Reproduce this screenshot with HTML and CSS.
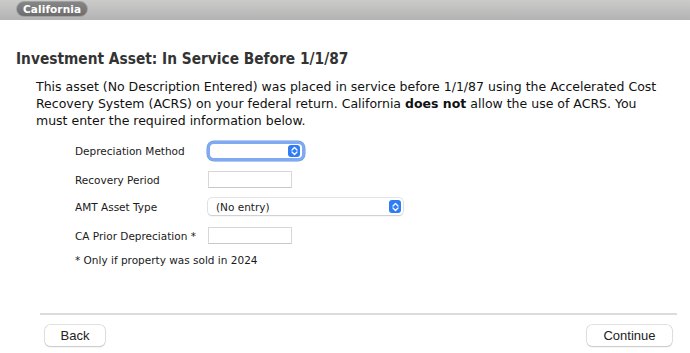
FILE: index.html
```html
<!DOCTYPE html>
<html>
<head>
<meta charset="utf-8">
<link rel="stylesheet" href="styles.css">
</head>
<body>
<div class="page">
  <header class="topbar">
    <span class="pill">California</span>
  </header>
  <main class="content">
    <h1 class="title">Investment Asset: In Service Before 1/1/87</h1>
    <p class="intro">This asset (No Description Entered) was placed in service before 1/1/87 using the Accelerated Cost Recovery System (ACRS) on your federal return. California <b>does not</b> allow the use of ACRS. You must enter the required information below.</p>
    <div class="form">
      <div class="row row-1">
        <span class="label">Depreciation Method</span>
        <div class="select select-focus select-short">
          <span class="select-text"></span>
          <span class="stepper"><svg width="7" height="10" viewBox="0 0 7 10"><path d="M1 4 L3.5 1.5 L6 4 M1 6 L3.5 8.5 L6 6" fill="none" stroke="#fff" stroke-width="1.3" stroke-linecap="round" stroke-linejoin="round"/></svg></span>
        </div>
      </div>
      <div class="row row-2">
        <span class="label">Recovery Period</span>
        <div class="input"></div>
      </div>
      <div class="row row-3">
        <span class="label">AMT Asset Type</span>
        <div class="select select-long">
          <span class="select-text">(No entry)</span>
          <span class="stepper"><svg width="7" height="10" viewBox="0 0 7 10"><path d="M1 4 L3.5 1.5 L6 4 M1 6 L3.5 8.5 L6 6" fill="none" stroke="#fff" stroke-width="1.3" stroke-linecap="round" stroke-linejoin="round"/></svg></span>
        </div>
      </div>
      <div class="row row-4">
        <span class="label">CA Prior Depreciation *</span>
        <div class="input"></div>
      </div>
      <p class="note">* Only if property was sold in 2024</p>
    </div>
  </main>
  <footer class="footer">
    <div class="rule"></div>
    <div class="buttons">
      <button class="btn btn-back">Back</button>
      <button class="btn btn-continue">Continue</button>
    </div>
  </footer>
</div>
</body>
</html>
```

FILE: styles.css
```css
html, body {
  margin: 0;
  padding: 0;
  background: #ffffff;
}
body {
  font-family: "DejaVu Sans", Verdana, sans-serif;
  color: #111;
  width: 690px;
  height: 353px;
  overflow: hidden;
}
.page {
  display: flex;
  flex-direction: column;
  height: 353px;
}
.topbar {
  height: 20px;
  box-sizing: border-box;
  background: linear-gradient(#cbcbca, #b3b3b3);
  display: flex;
  align-items: flex-start;
  padding: 1px 0 0 16px;
}
.pill {
  display: inline-block;
  height: 16px;
  box-sizing: border-box;
  padding: 0 6px;
  border-radius: 8px;
  background: linear-gradient(#868686, #6d6d6d);
  border: 1px solid #a0a0a0;
  color: #fff;
  font-weight: bold;
  font-size: 10.5px;
  line-height: 14px;
  letter-spacing: 0.1px;
}
.content {
  padding: 0 0 0 16px;
  flex: 1;
}
.title {
  margin: 29px 0 0 0;
  font-family: "DejaVu Sans Condensed", "DejaVu Sans", sans-serif;
  font-stretch: condensed;
  font-size: 15.3px;
  line-height: 20px;
  font-weight: bold;
  color: #333;
}
.intro {
  margin: 9px 0 0 20px;
  width: 634px;
  font-size: 12.5px;
  line-height: 17px;
  color: #111;
}
.form {
  margin: 13px 0 0 59px;
  display: flex;
  flex-direction: column;
}
.row {
  display: flex;
  align-items: center;
  height: 17px;
}
.row-1 { margin-bottom: 12px; }
.row-2 { margin-bottom: 10px; }
.row-3 { margin-bottom: 12px; }
.row-4 { margin-bottom: 10px; }
.label {
  width: 133px;
  font-size: 10.5px;
  color: #1a1a1a;
}
.input {
  width: 84px;
  height: 17px;
  box-sizing: border-box;
  border: 1px solid #d8d8d8;
  border-bottom-color: #c8c8c8;
  background: #fff;
}
.select {
  height: 17px;
  box-sizing: border-box;
  border-radius: 4px;
  background: #fff;
  box-shadow: 0 0 0 0.5px #c9c9c9, 0 1px 1.5px rgba(0,0,0,0.18);
  display: flex;
  align-items: center;
  justify-content: space-between;
  padding: 0 2px 0 8px;
}
.select-short {
  width: 92px;
  margin-left: 2px;
  height: 14px;
}
.select-focus {
  box-shadow: 0 0 0 3px #7fa9f0, 0 0 0 3.5px #6b98e6;
}
.select-long {
  width: 195px;
}
.select-text {
  font-size: 10.5px;
  color: #222;
}
.stepper {
  width: 12px;
  height: 13px;
  border-radius: 3px;
  background: #2f7df6;
  display: flex;
  align-items: center;
  justify-content: center;
}
.select-short .stepper {
  height: 12px;
}
.note {
  margin: 0;
  font-size: 10.5px;
  line-height: 13px;
  color: #1a1a1a;
}
.footer {
  padding: 0 13px 7px 40px;
}
.rule {
  height: 2px;
  background: #dcdcdc;
}
.buttons {
  display: flex;
  justify-content: space-between;
  margin-top: 10px;
  padding: 0 5px 0 5px;
}
.btn {
  font-family: "Liberation Sans", Arial, sans-serif;
  font-size: 13px;
  color: #222;
  background: #fff;
  border: none;
  border-radius: 5px;
  box-shadow: 0 0 0 0.5px #c4c4c4, 0 1px 1.5px rgba(0,0,0,0.2);
  height: 21px;
  padding: 0;
}
.btn-back {
  width: 60px;
}
.btn-continue {
  width: 85px;
}
```
